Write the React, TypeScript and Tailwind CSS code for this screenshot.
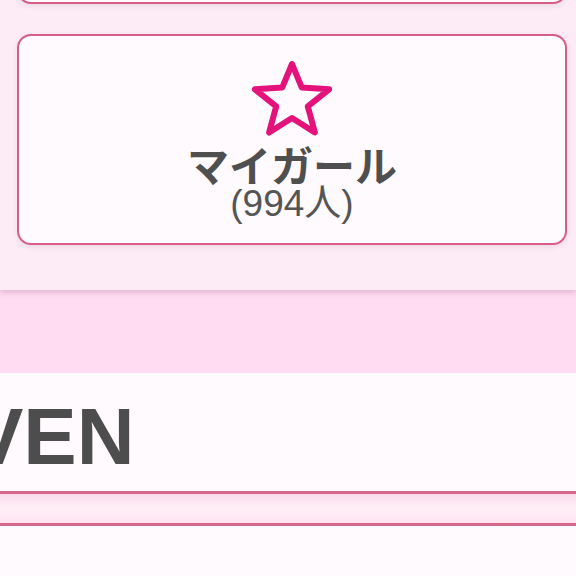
import React from 'react';

// outline star, rounded joins
function StarOutline() {
    const pts = '42,4 51.8,27.6 79.1,29.3 57.8,46.4 64.9,72.5 42,58 19.1,72.5 26.2,46.4 4.9,29.3 32.2,27.6';
    return (
        <svg width="84" height="80" viewBox="0 0 84 80" fill="none">
            <polygon points={pts} stroke="#e3137b" strokeWidth="6" strokeLinejoin="round" />
        </svg>
    );
}

export default function App() {
    return (
        <div className="h-[576px] w-full overflow-hidden bg-[#fffafd] font-['Liberation_Sans','Noto_Sans_CJK_JP',sans-serif]">
            {/* card panel */}
            <div className="relative z-10 flex flex-col gap-[30px] bg-[#fdebf6] pb-[45px] pl-[17px] pr-[9px] shadow-[0_3px_5px_rgba(150,90,120,0.25)]">
                <div className="-mt-[96px] h-[100px] rounded-[14px] border-2 border-[#d95e87] bg-[#fffafd] shadow-[0_2px_6px_rgba(0,0,0,0.08)]" />
                <div className="flex h-[211px] flex-col items-center rounded-[14px] border-2 border-[#d95e87] bg-[#fffafd] pt-[24px] shadow-[0_2px_6px_rgba(0,0,0,0.08)]">
                    <StarOutline />
                    <div className="mt-[3px] font-['Noto_Sans_CJK_JP',sans-serif] text-[42px] font-bold leading-[42px] text-[#4f4f4f]">
                        マイガール
                    </div>
                    <div className="mt-[1px] text-[37px] leading-[36px] text-[#555555]">(994人)</div>
                </div>
            </div>

            {/* pink band */}
            <div className="h-[83px] bg-[#ffdcf2]" />

            {/* title bar */}
            <div className="h-[118px] overflow-hidden bg-[#fffafd] pt-[24px]">
                <div className="-ml-[30px] whitespace-nowrap text-[80px] font-bold leading-none text-[#4d4d4d]">VEN</div>
            </div>

            {/* tab strip */}
            <div className="h-[35px] border-y-[3px] border-[#d9668b] bg-gradient-to-b from-[#fbdbe9] via-[#fff0f8] to-[#fde3ef]" />
        </div>
    );
}
